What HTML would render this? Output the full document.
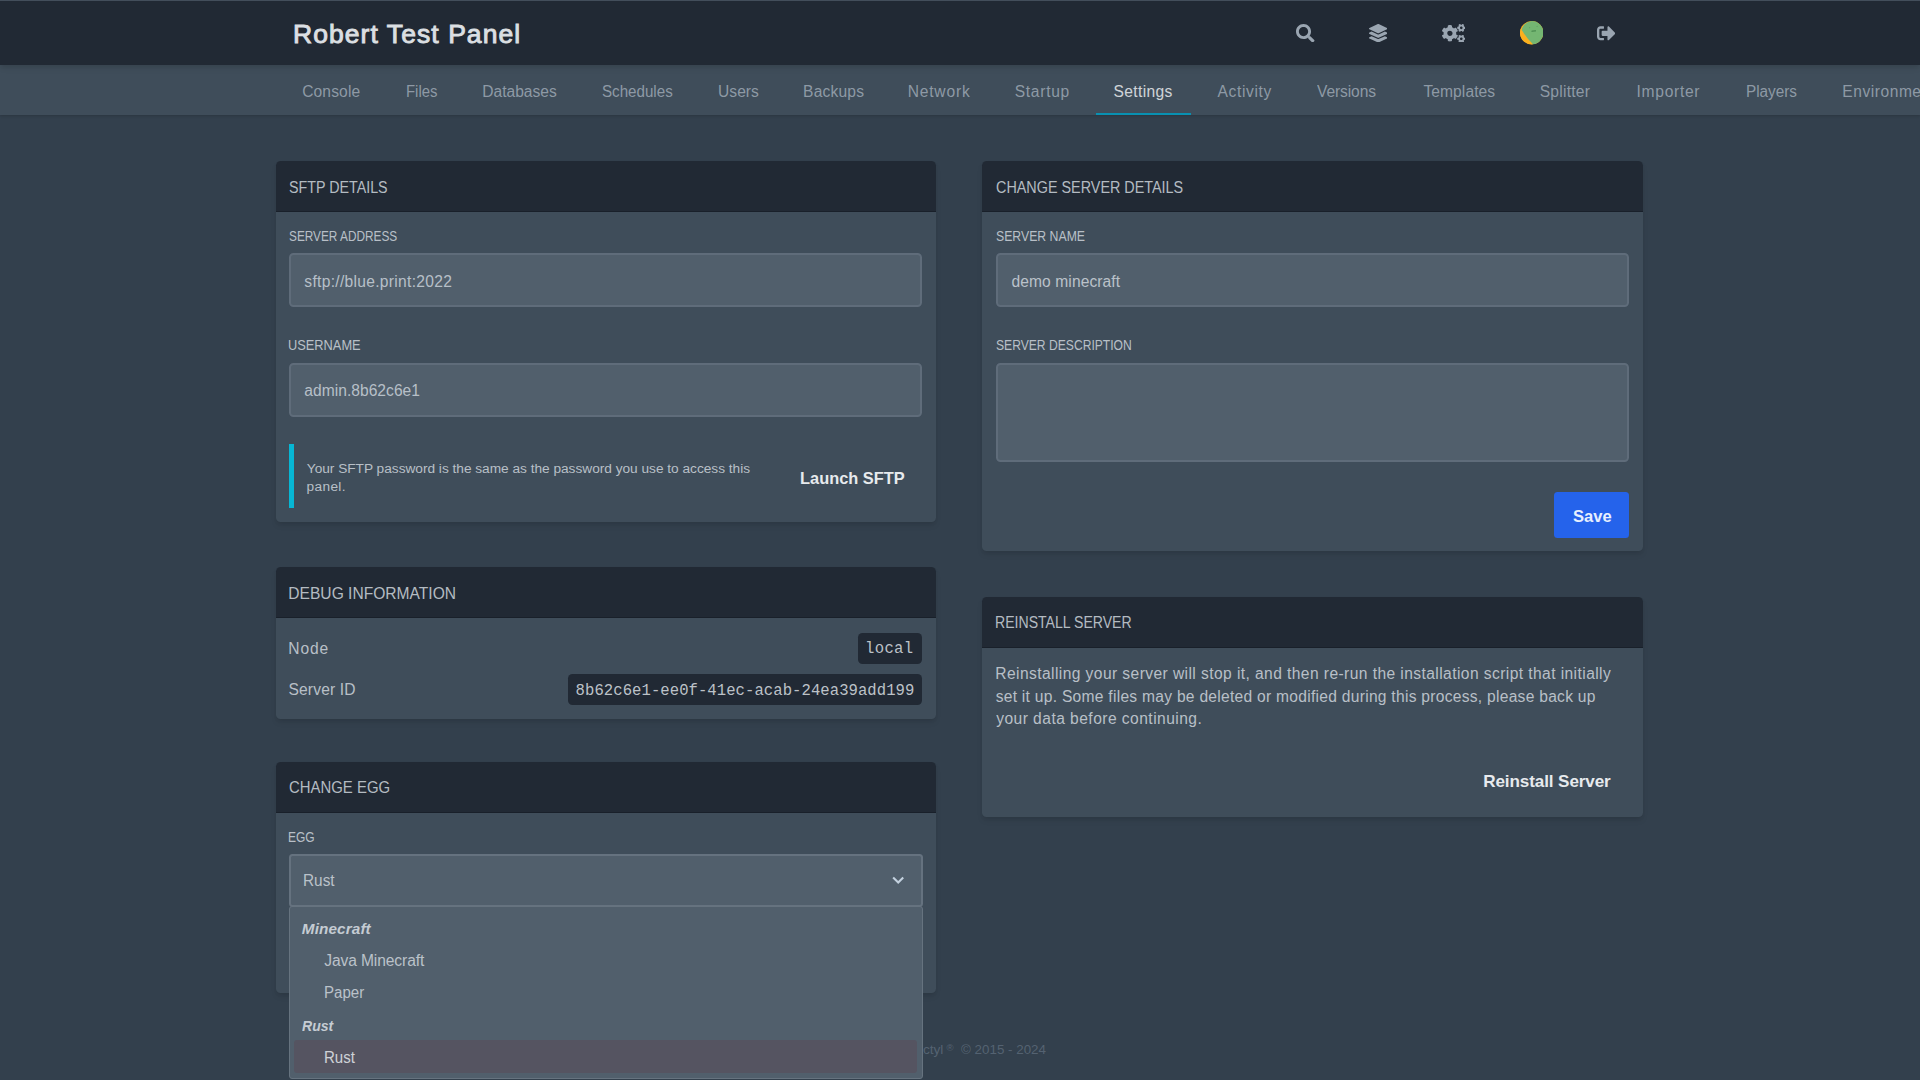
<!DOCTYPE html><html lang="en"><head><meta charset="utf-8"><title>Robert Test Panel</title><style>

*{margin:0;padding:0;box-sizing:border-box}
html,body{width:1920px;height:1080px;overflow:hidden;background:#33404d;font-family:'Liberation Sans', sans-serif;}
#app{position:relative;width:1920px;height:1080px;overflow:hidden;background:#33404d}
.abs{position:absolute}
.t{position:absolute;white-space:pre;line-height:1;transform-origin:0 0;}
.top{position:absolute;left:0;top:0;width:1920px;height:64.7px;background:#212934;box-shadow:0 4px 6px -1px rgba(0,0,0,.1),0 2px 4px -1px rgba(0,0,0,.06);}
.topline{position:absolute;left:0;top:0;width:1920px;height:1px;background:#434e5b;}
.sub{position:absolute;left:0;top:64.7px;width:1920px;height:50.2px;background:#3f4d5a;box-shadow:0 1px 3px 0 rgba(0,0,0,.1),0 1px 2px 0 rgba(0,0,0,.06);}
.ul{position:absolute;left:1096px;top:112.8px;width:95px;height:2.1px;background:#0891b2}
.card{position:absolute;background:#3f4d5a;border-radius:4.5px;box-shadow:0 4px 6px -1px rgba(0,0,0,.1),0 2px 4px -1px rgba(0,0,0,.06);}
.hd{position:absolute;left:0;top:0;width:100%;height:51.2px;background:#212934;border-bottom:1px solid #19202a;border-radius:4.5px 4.5px 0 0}
.inp{position:absolute;background:#515f6c;border:2.2px solid #5f6c7a;border-radius:4.5px}
.t{opacity:.87}.m{font-family:'Liberation Mono',monospace}.b{font-weight:bold;opacity:.96}.i{font-style:italic}
.code{position:absolute;background:#212934;border-radius:4.5px}

</style></head><body><div id="app">
<div class="sub"></div><div class="ul"></div>
<div class="top"></div><div class="topline"></div>
<div class="card" style="left:275.6px;top:160.6px;width:660.8px;height:361.1px"><div class="hd"></div></div>
<div class="card" style="left:275.6px;top:567.1px;width:660.8px;height:151.5px"><div class="hd"></div></div>
<div class="card" style="left:275.6px;top:762px;width:660.8px;height:230.9px"><div class="hd"></div></div>
<div class="card" style="left:982px;top:160.6px;width:660.6px;height:390.3px"><div class="hd"></div></div>
<div class="card" style="left:982px;top:596.6px;width:660.6px;height:220.6px"><div class="hd"></div></div>
<div class="inp" style="left:289.2px;top:253.2px;width:633.3px;height:54.3px;"></div>
<div class="inp" style="left:289.2px;top:362.5px;width:633.3px;height:54.4px;"></div>
<div class="inp" style="left:996.1px;top:253.2px;width:632.8px;height:54.3px;"></div>
<div class="inp" style="left:996.1px;top:362.5px;width:632.8px;height:99.6px;"></div>
<div class="abs" style="left:289.2px;top:443.8px;width:4.6px;height:64.2px;background:#06b6d4"></div>
<div class="code" style="left:857.9px;top:632.5px;width:64.6px;height:31.3px;"></div>
<div class="code" style="left:567.7px;top:673.5px;width:354.8px;height:31.1px;"></div>
<div class="abs" style="left:1554.2px;top:492.1px;width:74.7px;height:45.5px;background:#2563eb;border-radius:3.5px"></div>
<div class="inp" style="left:289.2px;top:854px;width:633.5px;height:52.6px;border-color:#65727f;border-radius:3.5px;"></div>
<svg class="abs" style="left:888.3px;top:870.3px" width="20.4" height="20.4" viewBox="0 0 20 20"><path fill="#C3D1DF" d="M9.293 12.95l.707.707L15.657 8l-1.414-1.414L10 10.828 5.757 6.586 4.343 8z"/></svg>
<svg class="abs" style="left:1296.2px;top:23.8px" width="18.5" height="18.5" viewBox="0 0 512 512"><path fill="#9aa5b1" d="M505 442.7L405.3 343c-4.5-4.5-10.6-7-17-7H372c27.600-35.300 44-79.700 44-128C416 93.100 322.900 0 208 0S0 93.100 0 208s93.100 208 208 208c48.300 0 92.700-16.400 128-44v16.300c0 6.400 2.500 12.500 7 17l99.700 99.700c9.400 9.400 24.600 9.400 33.900 0l28.300-28.300c9.400-9.400 9.400-24.600.1-34zM208 336c-70.700 0-128-57.200-128-128 0-70.700 57.200-128 128-128 70.700 0 128 57.200 128 128 0 70.700-57.200 128-128 128z"/></svg>
<svg class="abs" style="left:1368.9px;top:23.8px" width="18.5" height="18.5" viewBox="0 0 512 512"><path fill="#9aa5b1" d="M12.410 148.020l232.940 105.670c6.800 3.090 14.490 3.090 21.290 0l232.940-105.670c16.550-7.510 16.550-32.520 0-40.030L266.650 2.310a25.607 25.607 0 0 0-21.290 0L12.410 107.980c-16.550 7.510-16.550 32.530 0 40.040zm487.180 88.280l-58.090-26.330-161.640 73.270c-7.560 3.430-15.590 5.170-23.860 5.170s-16.290-1.740-23.860-5.170L70.510 209.970l-58.100 26.330c-16.550 7.500-16.550 32.500 0 40l232.940 105.590c6.800 3.080 14.490 3.080 21.290 0L499.590 276.300c16.550-7.500 16.550-32.500 0-40zm0 127.800l-57.870-26.230-161.860 73.370c-7.560 3.430-15.590 5.170-23.860 5.170s-16.290-1.740-23.860-5.170L70.290 337.870 12.410 364.100c-16.550 7.500-16.550 32.500 0 40l232.940 105.590c6.800 3.080 14.490 3.080 21.290 0L499.590 404.100c16.550-7.500 16.550-32.500 0-40z"/></svg>
<svg class="abs" style="left:1441.6px;top:23.6px" width="23.4" height="18.7" viewBox="0 0 640 512"><path fill="#9aa5b1" d="M512.100 191l-8.200 14.300c-3 5.300-9.400 7.500-15.100 5.400-11.800-4.400-22.600-10.700-32.100-18.600-4.600-3.800-5.800-10.500-2.800-15.700l8.200-14.300c-6.900-8-12.300-17.300-15.900-27.400h-16.500c-6 0-11.200-4.300-12.200-10.300-2-12-2.100-24.600 0-37.100 1-6 6.200-10.400 12.200-10.400h16.500c3.600-10.100 9-19.400 15.900-27.400l-8.200-14.300c-3-5.200-1.900-11.900 2.800-15.700 9.500-7.900 20.400-14.200 32.100-18.600 5.700-2.100 12.100.1 15.100 5.400l8.200 14.300c10.500-1.900 21.200-1.900 31.700 0L552 6.300c3-5.300 9.400-7.500 15.100-5.400 11.800 4.400 22.600 10.700 32.100 18.600 4.600 3.800 5.800 10.500 2.800 15.700l-8.200 14.300c6.900 8 12.300 17.300 15.900 27.400h16.500c6 0 11.200 4.300 12.200 10.300 2 12 2.100 24.600 0 37.100-1 6-6.200 10.400-12.200 10.400h-16.500c-3.600 10.100-9 19.400-15.900 27.400l8.200 14.300c3 5.200 1.900 11.900-2.800 15.700-9.500 7.900-20.400 14.200-32.100 18.600-5.700 2.100-12.100-.1-15.100-5.400l-8.200-14.300c-10.400 1.900-21.200 1.900-31.700 0zm-10.500-58.800c38.500 29.600 82.400-14.300 52.800-52.800-38.500-29.700-82.400 14.300-52.800 52.800zM386.300 286.100l33.700 16.800c10.100 5.800 14.500 18.100 10.500 29.100-8.900 24.200-26.400 46.400-42.600 65.800-7.400 8.900-20.200 11.100-30.300 5.300l-29.100-16.800c-16 13.700-34.600 24.600-54.900 31.700v33.600c0 11.600-8.300 21.600-19.700 23.600-24.600 4.200-50.400 4.400-75.900 0-11.500-2-20-11.900-20-23.600V418c-20.300-7.200-38.900-18-54.900-31.700L74 403c-10 5.800-22.900 3.600-30.300-5.300-16.200-19.400-33.300-41.600-42.200-65.700-4-10.900.4-23.200 10.500-29.100l33.300-16.800c-3.900-20.900-3.900-42.400 0-63.400L12 205.800c-10.100-5.800-14.600-18.100-10.500-29 8.900-24.200 26-46.400 42.200-65.800 7.400-8.900 20.200-11.100 30.300-5.300l29.100 16.800c16-13.700 34.600-24.600 54.900-31.700V57.100c0-11.500 8.200-21.500 19.600-23.500 24.600-4.200 50.500-4.400 76-.1 11.500 2 20 11.900 20 23.600v33.600c20.300 7.200 38.900 18 54.900 31.700l29.100-16.800c10-5.800 22.900-3.600 30.300 5.300 16.200 19.400 33.200 41.600 42.100 65.800 4 10.900.1 23.200-10 29.100l-33.700 16.800c3.900 21 3.900 42.500 0 63.500zm-117.600 21.100c59.200-77-28.700-164.900-105.700-105.700-59.200 77 28.700 164.900 105.700 105.700zm243.400 182.700l-8.200 14.300c-3 5.300-9.400 7.500-15.100 5.400-11.800-4.400-22.600-10.700-32.100-18.600-4.600-3.800-5.800-10.500-2.800-15.700l8.200-14.300c-6.900-8-12.300-17.300-15.900-27.400h-16.500c-6 0-11.200-4.300-12.200-10.300-2-12-2.100-24.600 0-37.100 1-6 6.200-10.400 12.200-10.400h16.500c3.600-10.100 9-19.400 15.900-27.400l-8.200-14.300c-3-5.200-1.900-11.900 2.800-15.700 9.500-7.900 20.400-14.200 32.100-18.600 5.700-2.100 12.100.1 15.100 5.400l8.200 14.300c10.500-1.900 21.200-1.900 31.700 0l8.200-14.300c3-5.300 9.400-7.500 15.100-5.400 11.800 4.400 22.600 10.700 32.100 18.600 4.600 3.800 5.800 10.500 2.800 15.700l-8.200 14.300c6.900 8 12.300 17.300 15.900 27.400h16.500c6 0 11.200 4.300 12.200 10.300 2 12 2.100 24.600 0 37.100-1 6-6.200 10.400-12.200 10.400h-16.500c-3.600 10.100-9 19.400-15.900 27.400l8.200 14.300c3 5.200 1.900 11.900-2.800 15.700-9.500 7.900-20.400 14.200-32.100 18.600-5.700 2.100-12.100-.1-15.100-5.400l-8.200-14.300c-10.400 1.900-21.200 1.900-31.700 0zM501.600 431c38.500 29.600 82.400-14.300 52.800-52.800-38.500-29.600-82.400 14.300-52.800 52.800z"/></svg>
<svg class="abs" style="left:1519.5px;top:21.4px" width="23.4" height="23.4" viewBox="0 0 36 36"><defs><clipPath id="av"><circle cx="18" cy="18" r="18"/></clipPath></defs><g clip-path="url(#av)"><rect width="36" height="36" fill="#fbb01f"/><circle cx="20.3" cy="18" r="18.3" fill="#74b672"/><path d="M-1 10 L4 15.6 Q9.5 25.5 19 34.6 L20 37 L-1 37 Z" fill="#fbb01f"/><rect x="17.600" y="14.800" width="7.200" height="1.300" rx=".6" fill="#2f6f38" transform="rotate(-3 21 15.400)"/><circle cx="14.900" cy="10.200" r=".8" fill="#5fa163"/><circle cx="26.300" cy="8.300" r=".8" fill="#5fa163"/></g></svg>
<svg class="abs" style="left:1596.8px;top:23.7px" width="18.6" height="18.6" viewBox="0 0 512 512"><path fill="#9aa5b1" d="M497 273L329 441c-15 15-41 4.500-41-17v-96H152c-13.300 0-24-10.700-24-24v-96c0-13.300 10.700-24 24-24h136V88c0-21.400 25.900-32 41-17l168 168c9.300 9.400 9.300 24.600 0 34zM192 436v-40c0-6.600-5.400-12-12-12H96c-17.700 0-32-14.300-32-32V160c0-17.700 14.300-32 32-32h84c6.600 0 12-5.400 12-12V76c0-6.600-5.400-12-12-12H96c-53 0-96 43-96 96v192c0 53 43 96 96 96h84c6.600 0 12-5.400 12-12z"/></svg>

<span id="t0" class="t" style="left:293.02px;top:21.10px;font-size:26.5px;color:#e3e7eb;letter-spacing:1.061px;opacity:0.96;-webkit-text-stroke:0.9px #e3e7eb;">Robert Test Panel</span>
<span id="t1" class="t" style="left:302.14px;top:83.91px;font-size:15.6px;color:#9aa5b1;letter-spacing:0.146px;">Console</span>
<span id="t2" class="t" style="left:405.54px;top:83.90px;font-size:15.6px;color:#9aa5b1;transform:scaleX(0.9560);">Files</span>
<span id="t3" class="t" style="left:482.28px;top:83.91px;font-size:15.6px;color:#9aa5b1;letter-spacing:-0.010px;">Databases</span>
<span id="t4" class="t" style="left:602.04px;top:83.91px;font-size:15.6px;color:#9aa5b1;transform:scaleX(0.9713);">Schedules</span>
<span id="t5" class="t" style="left:718.11px;top:83.91px;font-size:15.6px;color:#9aa5b1;letter-spacing:-0.008px;">Users</span>
<span id="t6" class="t" style="left:803.10px;top:83.91px;font-size:15.6px;color:#9aa5b1;letter-spacing:0.182px;">Backups</span>
<span id="t7" class="t" style="left:907.71px;top:83.91px;font-size:15.6px;color:#9aa5b1;letter-spacing:0.797px;">Network</span>
<span id="t8" class="t" style="left:1014.69px;top:83.91px;font-size:15.6px;color:#9aa5b1;letter-spacing:0.711px;">Startup</span>
<span id="t9" class="t" style="left:1113.51px;top:83.91px;font-size:15.6px;color:#e5e8eb;letter-spacing:0.352px;">Settings</span>
<span id="t10" class="t" style="left:1217.60px;top:83.91px;font-size:15.6px;color:#9aa5b1;letter-spacing:0.621px;">Activity</span>
<span id="t11" class="t" style="left:1317.00px;top:83.91px;font-size:15.6px;color:#9aa5b1;letter-spacing:-0.110px;">Versions</span>
<span id="t12" class="t" style="left:1423.48px;top:83.91px;font-size:15.6px;color:#9aa5b1;letter-spacing:0.065px;">Templates</span>
<span id="t13" class="t" style="left:1539.63px;top:83.90px;font-size:15.6px;color:#9aa5b1;letter-spacing:0.253px;">Splitter</span>
<span id="t14" class="t" style="left:1636.56px;top:83.90px;font-size:15.6px;color:#9aa5b1;letter-spacing:0.703px;">Importer</span>
<span id="t15" class="t" style="left:1745.74px;top:83.91px;font-size:15.6px;color:#9aa5b1;transform:scaleX(0.9811);">Players</span>
<span id="t16" class="t" style="left:1842.32px;top:83.91px;font-size:15.6px;color:#9aa5b1;letter-spacing:0.549px;">Environm</span>
<span id="t17" class="t" style="left:1912.26px;top:83.91px;font-size:15.6px;color:#9aa5b1;">ent</span>
<span id="t18" class="t" style="left:289.09px;top:180.01px;font-size:15.6px;color:#cad1d8;transform:scaleX(0.9155);">SFTP DETAILS</span>
<span id="t19" class="t" style="left:288.77px;top:229.60px;font-size:13.9px;color:#cad1d8;transform:scaleX(0.8513);">SERVER ADDRESS</span>
<span id="t20" class="t" style="left:304.35px;top:274.01px;font-size:15.6px;color:#c6ced6;letter-spacing:0.295px;">sftp://blue.print:2022</span>
<span id="t21" class="t" style="left:288.13px;top:339.01px;font-size:13.9px;color:#cad1d8;transform:scaleX(0.9225);">USERNAME</span>
<span id="t22" class="t" style="left:304.26px;top:383.30px;font-size:15.6px;color:#c6ced6;letter-spacing:0.033px;">admin.8b62c6e1</span>
<span id="t23" class="t" style="left:306.79px;top:461.80px;font-size:13.7px;color:#cad1d8;letter-spacing:-0.016px;">Your SFTP password is the same as the password you use to access this</span>
<span id="t24" class="t" style="left:306.57px;top:479.71px;font-size:13.7px;color:#cad1d8;letter-spacing:0.328px;">panel.</span>
<span id="t25" class="t b" style="left:800.00px;top:470.01px;font-size:17.1px;color:#eef1f4;transform:scaleX(0.9594);">Launch SFTP</span>
<span id="t26" class="t" style="left:288.32px;top:586.01px;font-size:15.6px;color:#cad1d8;letter-spacing:-0.002px;">DEBUG INFORMATION</span>
<span id="t27" class="t" style="left:288.32px;top:640.71px;font-size:15.6px;color:#cad1d8;letter-spacing:0.881px;">Node</span>
<span id="t28" class="t" style="left:288.49px;top:681.91px;font-size:15.6px;color:#cad1d8;letter-spacing:0.148px;">Server ID</span>
<span id="t29" class="t m" style="left:865.09px;top:642.31px;font-size:15.6px;color:#d3d9df;letter-spacing:0.308px;">local</span>
<span id="t30" class="t m" style="left:575.62px;top:683.60px;font-size:15.6px;color:#d3d9df;letter-spacing:0.054px;">8b62c6e1-ee0f-41ec-acab-24ea39add199</span>
<span id="t31" class="t" style="left:288.83px;top:780.01px;font-size:15.6px;color:#cad1d8;transform:scaleX(0.9563);">CHANGE EGG</span>
<span id="t32" class="t" style="left:288.36px;top:831.10px;font-size:13.9px;color:#cad1d8;transform:scaleX(0.8653);">EGG</span>
<span id="t33" class="t" style="left:303.39px;top:873.41px;font-size:15.6px;color:#cad1d8;transform:scaleX(0.9853);">Rust</span>
<span id="t49" class="t" style="left:875.47px;top:1043.41px;font-size:13.7px;color:#5a6877;letter-spacing:-0.069px;">Pterodactyl</span>
<span id="t50" class="t" style="left:946.57px;top:1043.31px;font-size:9.6px;color:#5a6877;letter-spacing:4.718px;">®</span>
<span id="t51" class="t" style="left:960.50px;top:1043.41px;font-size:13.7px;color:#5a6877;transform:scaleX(0.9773);">© 2015 - 2024</span>
<div class="abs" style="left:289.4px;top:906.2px;width:633.3px;height:172.8px;background:#515f6c;border:1.2px solid #66737f;border-radius:3px"></div><div class="abs" style="left:294px;top:1040px;width:623px;height:33.2px;background:#555461;border-radius:3px"></div>
<span id="t34" class="t b i" style="left:301.78px;top:920.60px;font-size:15.3px;color:#cad1d8;letter-spacing:0.117px;">Minecraft</span>
<span id="t35" class="t" style="left:324.23px;top:952.91px;font-size:15.6px;color:#cad1d8;letter-spacing:-0.104px;">Java Minecraft</span>
<span id="t36" class="t" style="left:323.91px;top:985.01px;font-size:15.6px;color:#cad1d8;transform:scaleX(0.9648);">Paper</span>
<span id="t37" class="t b i" style="left:301.61px;top:1017.70px;font-size:15.3px;color:#cad1d8;transform:scaleX(0.9190);">Rust</span>
<span id="t38" class="t" style="left:323.91px;top:1049.60px;font-size:15.6px;color:#e0e4e8;transform:scaleX(0.9637);">Rust</span>
<span id="t39" class="t" style="left:995.88px;top:179.51px;font-size:15.6px;color:#cad1d8;transform:scaleX(0.9218);">CHANGE SERVER DETAILS</span>
<span id="t40" class="t" style="left:995.70px;top:229.60px;font-size:13.9px;color:#cad1d8;transform:scaleX(0.8826);">SERVER NAME</span>
<span id="t41" class="t" style="left:1011.51px;top:274.01px;font-size:15.6px;color:#cad1d8;letter-spacing:0.084px;">demo minecraft</span>
<span id="t42" class="t" style="left:995.75px;top:339.01px;font-size:13.9px;color:#cad1d8;transform:scaleX(0.8723);">SERVER DESCRIPTION</span>
<span id="t43" class="t b" style="left:1572.63px;top:508.01px;font-size:17.1px;color:#eff6ff;transform:scaleX(0.9674);">Save</span>
<span id="t44" class="t" style="left:995.04px;top:615.01px;font-size:15.6px;color:#cad1d8;transform:scaleX(0.9029);">REINSTALL SERVER</span>
<span id="t45" class="t" style="left:995.28px;top:665.81px;font-size:15.6px;color:#cad1d8;letter-spacing:0.416px;">Reinstalling your server will stop it, and then re-run the installation script that initially</span>
<span id="t46" class="t" style="left:995.64px;top:688.51px;font-size:15.6px;color:#cad1d8;letter-spacing:0.272px;">set it up. Some files may be deleted or modified during this process, please back up</span>
<span id="t47" class="t" style="left:996.18px;top:711.41px;font-size:15.6px;color:#cad1d8;letter-spacing:0.457px;">your data before continuing.</span>
<span id="t48" class="t b" style="left:1483.17px;top:773.01px;font-size:17.1px;color:#eef1f4;letter-spacing:-0.107px;">Reinstall Server</span>
</div></body></html>
